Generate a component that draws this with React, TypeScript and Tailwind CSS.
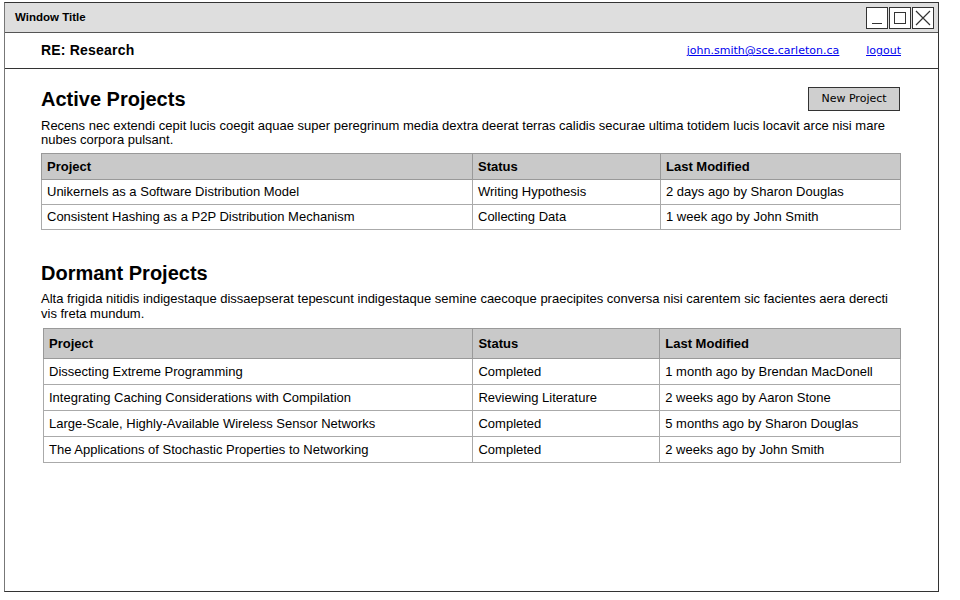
import React from 'react';

const active = [
  ['Unikernels as a Software Distribution Model', 'Writing Hypothesis', '2 days ago by Sharon Douglas'],
  ['Consistent Hashing as a P2P Distribution Mechanism', 'Collecting Data', '1 week ago by John Smith'],
];

const dormant = [
  ['Dissecting Extreme Programming', 'Completed', '1 month ago by Brendan MacDonell'],
  ['Integrating Caching Considerations with Compilation', 'Reviewing Literature', '2 weeks ago by Aaron Stone'],
  ['Large-Scale, Highly-Available Wireless Sensor Networks', 'Completed', '5 months ago by Sharon Douglas'],
  ['The Applications of Stochastic Properties to Networking', 'Completed', '2 weeks ago by John Smith'],
];

const sketch = { fontFamily: '"Comic Sans MS", "DejaVu Sans", sans-serif' };

const ProjectTable = ({ rows, headH, rowH, cols }: { rows: string[][]; headH: string; rowH: string; cols: string[] }) => (
  <table className="w-full border-collapse text-[13px] text-black">
    <colgroup>
      {cols.map((c, i) => (
        <col key={i} className={c} />
      ))}
    </colgroup>
    <thead>
      <tr className={`${headH} bg-[#c9c9c9]`}>
        {['Project', 'Status', 'Last Modified'].map((h) => (
          <th key={h} className="border border-[#999] px-[5px] text-left text-[13px] font-bold">
            {h}
          </th>
        ))}
      </tr>
    </thead>
    <tbody>
      {rows.map((r, i) => (
        <tr key={i} className={rowH}>
          {r.map((c, j) => (
            <td key={j} className="border border-[#aaa] px-[5px]">
              {c}
            </td>
          ))}
        </tr>
      ))}
    </tbody>
  </table>
);

export default function App() {
  return (
    <div className="h-[600px] w-[960px] bg-white pl-[4px] pt-[2px]" style={{ fontFamily: '"Liberation Sans", Arial, sans-serif' }}>
      <div className="flex h-[590px] w-[935px] flex-col border border-[#333] border-l-[#777]">
        {/* title bar */}
        <div className="flex h-[30px] items-center justify-between border-b border-[#555] bg-[#dedede] pl-[10px] pr-[2px]">
          <span className="text-[11.5px] font-bold">Window Title</span>
          <div className="flex gap-[1px] pr-[2px]">
            <div className="flex h-[22px] w-[22px] items-end justify-center border border-[#333] bg-white pb-[4px]">
              <div className="h-[1px] w-[10px] bg-[#333]" />
            </div>
            <div className="flex h-[22px] w-[22px] items-center justify-center border border-[#333] bg-white">
              <div className="h-[12px] w-[12px] border border-[#333]" />
            </div>
            <div className="flex h-[22px] w-[22px] items-center justify-center border border-[#333] bg-white">
              <svg width="16" height="16" viewBox="0 0 16 16" stroke="#333" strokeWidth="1.2">
                <path d="M1 1 L15 15 M15 1 L1 15" />
              </svg>
            </div>
          </div>
        </div>

        {/* header */}
        <div className="flex h-[36px] items-center justify-between border-b border-[#333] pl-[36px] pr-[37px]">
          <span className="text-[14px] font-bold tracking-[0.2px]">RE: Research</span>
          <div className="flex gap-[27px] pt-[2px] text-[11px] text-[#0000ee] underline" style={sketch}>
            <a>john.smith@sce.carleton.ca</a>
            <a>logout</a>
          </div>
        </div>

        {/* content */}
        <div className="pl-[36px] pr-[37px] pt-[18px]">
          <div className="flex h-[24px] items-center justify-between">
            <h1 className="text-[20px] font-bold">Active Projects</h1>
            <button className="mr-[1px] h-[24px] w-[92px] border border-[#333] bg-[#cfcfcf] text-[11px]" style={sketch}>
              New Project
            </button>
          </div>
          <p className="mt-[8px] text-[13px] leading-[14px]">
            Recens nec extendi cepit lucis coegit aquae super peregrinum media dextra deerat terras calidis securae ultima totidem lucis locavit arce nisi mare nubes corpora pulsant.
          </p>
          <div className="mt-[6px]">
            <ProjectTable rows={active} headH="h-[26px]" rowH="h-[25px]" cols={['w-[431px]', 'w-[188px]', 'w-[240px]']} />
          </div>

          <h1 className="mt-[31px] h-[24px] text-[20px] font-bold leading-[24px]">Dormant Projects</h1>
          <p className="mt-[6px] text-[13px] leading-[15px]">
            Alta frigida nitidis indigestaque dissaepserat tepescunt indigestaque semine caecoque praecipites conversa nisi carentem sic facientes aera derecti vis freta mundum.
          </p>
          <div className="ml-[2px] mt-[7px] w-[858px]">
            <ProjectTable rows={dormant} headH="h-[30px]" rowH="h-[26px]" cols={['w-[430px]', 'w-[187px]', 'w-[241px]']} />
          </div>
        </div>
      </div>
    </div>
  );
}
